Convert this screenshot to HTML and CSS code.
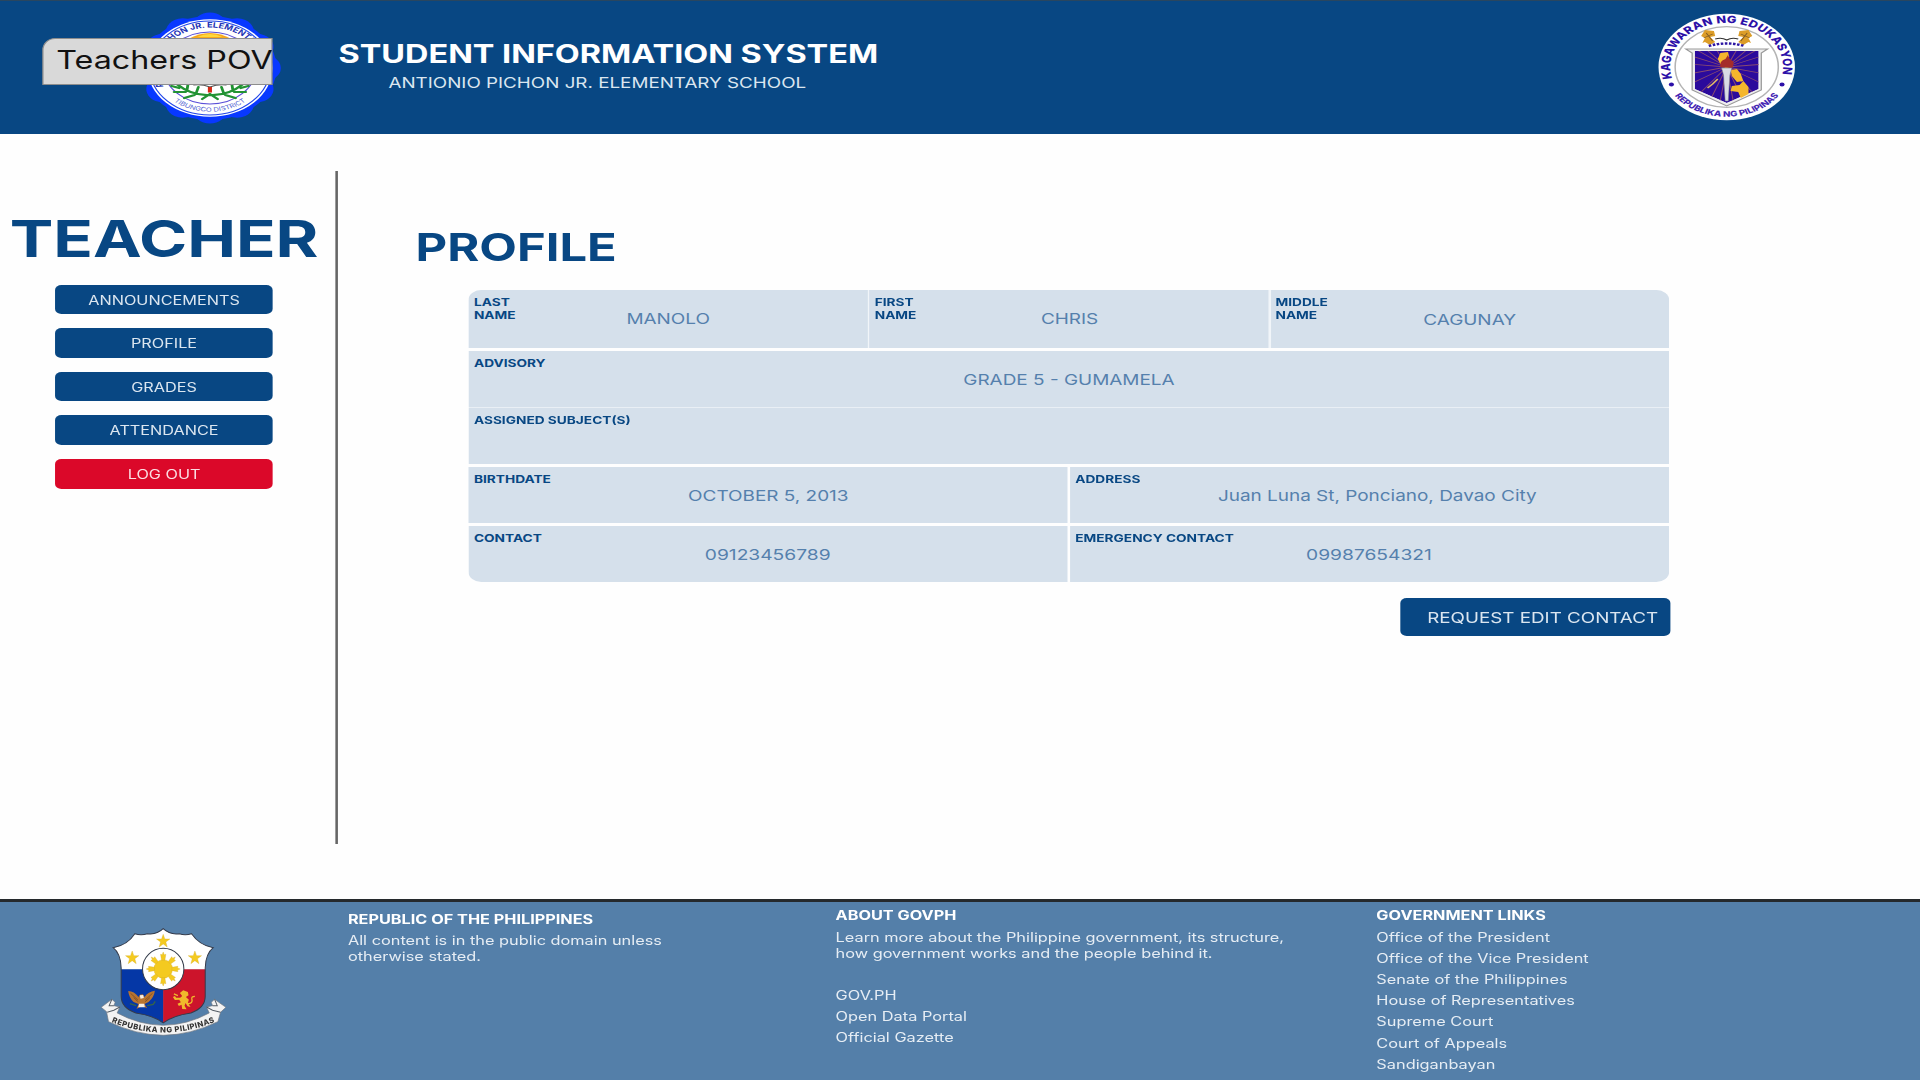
FILE: index.html
```html
<!DOCTYPE html>
<html lang="en">
<head>
<meta charset="utf-8">
<title>Student Information System - Profile</title>
<link rel="stylesheet" href="styles.css">
</head>
<body>
<div class="stage">
  <header class="header">
    <div class="brand">
      <svg class="school-seal" viewBox="-56 -56 112 112">
        <defs>
          <g id="bumps"><circle cy="-42.2" r="13.2"/><circle cy="42.2" r="13.2"/><circle cx="42.2" r="13.2"/><circle cx="-42.2" r="13.2"/></g>
          <path id="schoolTop" d="M-36.2 18.5 A40.6 40.6 0 1 1 36.2 18.5"/>
          <path id="schoolBottom" d="M-38.5 21 A44 44 0 0 0 38.5 21"/>
        </defs>
        <g fill="#0838ff"><circle r="52"/><use href="#bumps"/><use href="#bumps" transform="rotate(30)"/><use href="#bumps" transform="rotate(60)"/></g>
        <circle r="48.8" fill="#fff"/>
        <circle r="46.9" fill="none" stroke="#2347e8" stroke-width="1"/>
        <text class="school-text"><textPath href="#schoolTop" textLength="163" lengthAdjust="spacingAndGlyphs">ANTONIO PICHON JR. ELEMENTARY SCHOOL</textPath></text>
        <text class="district-text"><textPath href="#schoolBottom" startOffset="50%" text-anchor="middle">TIBUNGCO DISTRICT</textPath></text>
        <circle r="36" fill="#fff" stroke="#5a4fd8" stroke-width="1"/>
        <path d="M-17 -29 Q0 -41 17 -29 L14 -22 H-14Z" fill="#f7a81c"/>
        <path d="M-10 -31 Q0 -37 10 -31Z" fill="#ffd83a"/>
        <path d="M-26 16 Q-14 28 0 27 Q14 28 26 16 M-24 20 L-30 18 M-19 24 L-28 24 M-12 27 L-20 30 M-18 23 L-17 15 M-11 26 L-9 19 M24 20 L30 18 M19 24 L28 24 M12 27 L20 30 M18 23 L17 15 M11 26 L9 19 M0 26 L-6 31 M0 26 L6 31" fill="none" stroke="#229333" stroke-width="2.2" stroke-linecap="round"/>
        <path d="M-13 17 Q-6 16 0 19 Q6 16 13 17" fill="none" stroke="#555" stroke-width="1.2"/>
        <rect x="-1.6" y="19" width="3.2" height="5.5" fill="#d42813"/>
      </svg>
      <div class="pov">Teachers POV</div>
    </div>
    <div class="titles">
      <h1 class="title">STUDENT INFORMATION SYSTEM</h1>
      <p class="school">ANTIONIO PICHON JR. ELEMENTARY SCHOOL</p>
    </div>
    <svg class="deped-seal" viewBox="-54 -54 108 108">
      <defs>
        <path id="depTop" d="M-42.6 11.4 A44.1 44.1 0 1 1 42.6 11.4"/>
        <path id="depBottom" d="M-42.5 26 A49.8 49.8 0 0 0 42.5 26"/>
        <clipPath id="shieldClip"><path d="M-25 -16H25V22L0 36L-25 22Z"/></clipPath>
      </defs>
      <circle r="53.3" fill="#fff"/>
      <circle r="40.3" fill="#fff" stroke="#b4b4b4" stroke-width="1.2"/>
      <text class="dep-top"><textPath href="#depTop" textLength="157">KAGAWARAN NG EDUKASYON</textPath></text>
      <text class="dep-bottom"><textPath href="#depBottom" startOffset="50%" text-anchor="middle" textLength="95">REPUBLIKA NG PILIPINAS</textPath></text>
      <circle cx="-43.2" cy="17.5" r="2" fill="#2c10a8"/><circle cx="43.2" cy="17.5" r="2" fill="#2c10a8"/>
      <path d="M-32 -18H32L27 -14V23L0 39L-27 23V-14Z" fill="#eee" stroke="#999" stroke-width="1"/>
      <g clip-path="url(#shieldClip)">
        <path d="M-25 -16H25V22L0 36L-25 22Z" fill="#2b0a9c"/>
        <path d="M0 0L-30 -22M0 0L-20 -22M0 0L-10 -22M0 0L10 -22M0 0L20 -22M0 0L30 -22M0 0L-30 -12M0 0L-30 -3M0 0L-30 7M0 0L-30 18M0 0L-24 30M0 0L-14 36M0 0L-6 40M0 0L30 -12M0 0L30 -3M0 0L30 7M0 0L30 18M0 0L24 30M0 0L14 36M0 0L6 40" stroke="#874a70" stroke-width=".8"/>
      </g>
      <path d="M-5 -14L1 -15L2 -10L0 -6L4 -2L0 2L-5 -3L-7 -8ZM3 3L8 2L11 7L13 14L8 15L4 9ZM4 19L10 18L13 14L17 20L17 27L11 31L9 25L3 24Z" fill="#f4b62d"/>
      <path d="M-7 12L-11 17L-15 21" fill="none" stroke="#e0b565" stroke-width="1.3"/>
      <path d="M-5 0Q-6 -6 -1 -8L1 -12Q2 -7 5 -6Q6 -2 4 1Z" fill="#a42c2b"/>
      <path d="M-4 1H4L2.5 8L1.2 34H-1.2L-2.5 8Z" fill="#d9dce4" stroke="#797b8a" stroke-width=".5"/>
      <g fill="#dc9d28"><path id="lamp" d="M-20 -31L-17 -37L-10 -36L-9 -31L-13 -30L-9 -25L-13 -22L-17 -25L-19 -24L-17 -29Z"/><use href="#lamp" transform="scale(-1 1)"/></g>
      <path d="M-16 -34L-11 -26M16 -34L11 -26M-18 -29L-11 -33M18 -29L11 -33" stroke="#805b25" stroke-width=".8"/>
      <path d="M-9 -28Q-4 -30 0 -27Q4 -30 9 -28" fill="none" stroke="#333" stroke-width="1"/>
      <path d="M-14 -21Q0 -26 14 -21" fill="none" stroke="#2c16a2" stroke-width="2.4" stroke-dasharray="2 1.2"/>
    </svg>
  </header>

  <main class="body">
    <aside class="sidebar">
      <h2 class="role">TEACHER</h2>
      <nav class="menu">
        <a class="menu-item">ANNOUNCEMENTS</a>
        <a class="menu-item">PROFILE</a>
        <a class="menu-item">GRADES</a>
        <a class="menu-item">ATTENDANCE</a>
        <a class="menu-item logout">LOG OUT</a>
      </nav>
    </aside>
    <section class="profile">
      <h2 class="profile-title">PROFILE</h2>
      <div class="card">
        <div class="row thirds">
          <div class="cell"><span class="label">LAST<br>NAME</span><span class="value raised">MANOLO</span></div>
          <div class="cell"><span class="label">FIRST<br>NAME</span><span class="value raised first">CHRIS</span></div>
          <div class="cell"><span class="label">MIDDLE<br>NAME</span><span class="value">CAGUNAY</span></div>
        </div>
        <div class="row joined">
          <div class="cell"><span class="label">ADVISORY</span><span class="value">GRADE 5 - GUMAMELA</span></div>
        </div>
        <div class="row subjects">
          <div class="cell"><span class="label">ASSIGNED SUBJECT(S)</span></div>
        </div>
        <div class="row halves">
          <div class="cell"><span class="label">BIRTHDATE</span><span class="value">OCTOBER 5, 2013</span></div>
          <div class="cell"><span class="label">ADDRESS</span><span class="value address">Juan Luna St, Ponciano, Davao City</span></div>
        </div>
        <div class="row halves last">
          <div class="cell"><span class="label">CONTACT</span><span class="value phone">09123456789</span></div>
          <div class="cell"><span class="label">EMERGENCY CONTACT</span><span class="value phone">09987654321</span></div>
        </div>
      </div>
      <a class="request">REQUEST EDIT CONTACT</a>
    </section>
  </main>

  <footer class="footer">
    <svg class="arms" viewBox="62 142 380 328" preserveAspectRatio="none">
      <defs>
        <clipPath id="armsClip"><path d="M252 147Q232 166 205 162Q185 168 167 162Q145 196 102 204Q125 222 126 265V350Q126 385 170 400Q225 408 252 430Q280 408 335 400Q378 385 378 350V265Q379 222 402 204Q360 196 337 162Q318 168 300 162Q272 166 252 147Z"/></clipPath>
        <path id="star" d="M0 -20L5 -6L20 -6L8 3L12 18L0 9L-12 18L-8 3L-20 -6L-5 -6Z"/>
        <path id="ray" d="M-5 -26L-8 -44L-3 -43L0 -51L3 -43L8 -44L5 -26Z"/>
        <path id="motto" d="M90 424Q170 458 252 459Q334 458 414 424"/>
      </defs>
      <path d="M66 383L98 359L108 368L104 378L122 382L114 400Q180 436 252 437Q324 436 390 400L382 382L400 378L396 368L406 359L440 383L424 398L416 426Q334 466 252 467Q170 466 88 426L82 396Z" fill="#f3f3f3" stroke="#6e7680" stroke-width="2"/>
      <path d="M98 359L90 378L104 378M122 382L104 392L84 398M406 359L414 378L400 378M382 382L400 392L424 398" fill="none" stroke="#555d66" stroke-width="3"/>
      <text class="motto"><textPath href="#motto" startOffset="50%" text-anchor="middle" textLength="318">REPUBLIKA NG PILIPINAS</textPath></text>
      <g clip-path="url(#armsClip)">
        <rect x="100" y="140" width="304" height="130" fill="#fff"/>
        <rect x="100" y="269" width="152" height="165" fill="#0537a6"/>
        <rect x="252" y="269" width="152" height="165" fill="#cc142b"/>
      </g>
      <path d="M252 147Q232 166 205 162Q185 168 167 162Q145 196 102 204Q125 222 126 265V350Q126 385 170 400Q225 408 252 430Q280 408 335 400Q378 385 378 350V265Q379 222 402 204Q360 196 337 162Q318 168 300 162Q272 166 252 147Z" fill="none" stroke="#343b4b" stroke-width="3"/>
      <circle cx="252" cy="268" r="62" fill="#fff" stroke="#333b4a" stroke-width="3"/>
      <g fill="#f4ca20" stroke="#d6ad28" stroke-width="1">
        <use href="#star" x="252" y="184"/><use href="#star" x="159" y="234"/><use href="#star" x="347" y="234"/>
        <g transform="translate(252 268)"><circle r="28"/><use href="#ray"/><use href="#ray" transform="rotate(45)"/><use href="#ray" transform="rotate(90)"/><use href="#ray" transform="rotate(135)"/><use href="#ray" transform="rotate(180)"/><use href="#ray" transform="rotate(225)"/><use href="#ray" transform="rotate(270)"/><use href="#ray" transform="rotate(315)"/></g>
      </g>
      <path d="M147 334Q165 334 178 352L182 345L191 344L196 352Q207 335 227 333Q225 352 208 367L196 373L204 386L188 379L172 388L178 373L163 367Q149 353 147 334Z" fill="#b87430"/>
      <path d="M154 341L176 361M164 354L176 366M220 341L198 361M212 354L198 366" stroke="#7b4a22" stroke-width="2.5"/>
      <path d="M182 347L192 346L194 355L184 357ZM180 372L195 372L197 383L177 383Z" fill="#f5eee6"/>
      <path d="M152 372L171 378M204 378L222 374L228 365" fill="none" stroke="#386546" stroke-width="4"/>
      <path d="M302 340L312 332L326 337L328 347L320 352L329 360L326 369L334 382L325 380L319 370L316 378L322 389L309 388L307 375L299 379L295 372L305 368L300 360L287 361L281 352L287 349L291 354L303 354L309 349Z" fill="#f0b92b"/>
      <path d="M325 372Q342 372 338 358Q336 350 347 350M284 343L296 348" fill="none" stroke="#f0b92b" stroke-width="4"/>
    </svg>
    <div class="col republic">
      <h3>REPUBLIC OF THE PHILIPPINES</h3>
      <p>All content is in the public domain unless<br>otherwise stated.</p>
    </div>
    <div class="col about">
      <h3>ABOUT GOVPH</h3>
      <p>Learn more about the Philippine government, its structure,<br>how government works and the people behind it.</p>
      <ul class="spaced"><li>GOV.PH</li><li>Open Data Portal</li><li>Official Gazette</li></ul>
    </div>
    <div class="col links">
      <h3>GOVERNMENT LINKS</h3>
      <ul><li>Office of the President</li><li>Office of the Vice President</li><li>Senate of the Philippines</li><li>House of Representatives</li><li>Supreme Court</li><li>Court of Appeals</li><li>Sandiganbayan</li></ul>
    </div>
  </footer>
</div>
</body>
</html>
```
FILE: styles.css
```css
* { box-sizing: border-box; margin: 0; padding: 0; }

html, body { width: 1920px; height: 1080px; overflow: hidden; background: #fefefe; }

body { font-family: Inter, "Liberation Sans", sans-serif; }

.stage {
  width: 1500px;
  height: 1080px;
  display: flex;
  flex-direction: column;
  transform: scaleX(1.28);
  transform-origin: 0 0;
}

/* Header */
.header {
  display: flex;
  height: 134px;
  flex: none;
  background: #084783;
  border-top: 1.5px solid #29465f;
  color: #fff;
}
.brand { position: relative; width: 264.5px; flex: none; }
.school-seal { position: absolute; left: 108.2px; top: 11.4px; width: 112px; height: 112px; }
.school-text { font-size: 7.5px; font-weight: 700; fill: #2434b4; }
.district-text { font-size: 6px; font-weight: 400; fill: #5364d2; }
.pov {
  position: absolute;
  left: 33px;
  top: 36.5px;
  width: 180px;
  height: 47px;
  padding-left: 10px;
  background: #d9d9d9;
  border: 1px solid #8d8d8d;
  border-top-left-radius: 10px 12px;
  color: #111;
  font-size: 25.2px;
  line-height: 42px;
  white-space: nowrap;
}
.titles { width: 421.5px; flex: none; padding-top: 37px; white-space: nowrap; }
.title { font-size: 25.3px; font-weight: 700; line-height: 32px; }
.school { padding-left: 39px; font-size: 14.7px; line-height: 26px; color: #dbe6f0; }
.deped-seal { width: 108px; height: 108px; margin: 12px 0 0 609px; flex: none; }
.dep-top { font-size: 10px; font-weight: 800; fill: #2c10a8; }
.dep-bottom { font-size: 7.6px; font-weight: 800; fill: #4526b4; }

/* Body */
.body { display: flex; height: 765px; flex: none; }
.sidebar {
  width: 264.4px;
  height: 673px;
  margin-top: 37px;
  padding: 38px 6px 0 0;
  border-right: 2.5px solid #666;
  flex: none;
  text-align: center;
}
.role { font-size: 51px; font-weight: 700; line-height: 60px; color: #084783; }
.menu { display: flex; flex-direction: column; align-items: center; gap: 14.1px; margin-top: 15.7px; }
.menu-item {
  width: 169.5px;
  height: 29.5px;
  border-radius: 5px;
  background: #084783;
  color: #dbe6f0;
  font-size: 12.7px;
  line-height: 31.6px;
}
.logout { background: #db0829; color: #fbdde2; }

.profile { padding: 89px 0 0 58.7px; width: 1041px; }
.profile-title { padding-left: 1.6px; font-size: 38.2px; font-weight: 700; line-height: 48px; color: #084783; }
.card { width: 937.5px; margin: 19px 0 0 43.3px; border-radius: 10px; overflow: hidden; }
.row { display: grid; height: 56px; margin-bottom: 3px; }
.thirds { grid-template-columns: repeat(3, 1fr); height: 58px; gap: 1.8px; background: #f1f5f9; }
.joined { margin-bottom: 0; border-bottom: 1.5px solid #e9eff5; height: 57px; }
.subjects { margin-bottom: 3px; }
.halves { grid-template-columns: repeat(2, 1fr); gap: 2px; }
.last { margin-bottom: 0; }
.cell {
  position: relative;
  display: flex;
  align-items: center;
  justify-content: center;
  background: #d5e0eb;
}
.label {
  position: absolute;
  left: 3.9px;
  top: 6px;
  font-size: 10.7px;
  font-weight: 700;
  line-height: 13px;
  color: #084783;
  white-space: nowrap;
}
.value { padding-top: 1px; font-size: 14.8px; color: #5580ad; white-space: nowrap; }
.raised { padding: 0 0 1px; }
.first { padding-left: 1px; }
.address { padding-left: 12px; }
.phone { padding-right: 1px; font-size: 15px; }
.request {
  display: block;
  width: 210.8px;
  height: 38px;
  margin: 15.5px 0 0 771px;
  padding-left: 20.9px;
  border-radius: 5px;
  background: #084783;
  color: #dbe6f0;
  font-size: 14.7px;
  line-height: 41.5px;
  white-space: nowrap;
}

/* Footer */
.footer {
  display: flex;
  height: 181px;
  flex: none;
  border-top: 3px solid #25292c;
  background: #547fa9;
  color: #e6edf4;
  font-size: 12.75px;
  line-height: 16px;
}
.arms { width: 99px; height: 109.3px; margin: 25.3px 93.6px 0 78.2px; flex: none; }
.motto { font-size: 23px; font-weight: 800; fill: #333; }
.col { padding-top: 6.3px; flex: none; white-space: nowrap; }
.col h3 { font-size: 12.7px; line-height: 16px; margin-bottom: 5.3px; color: #fff; }
.republic { width: 381px; padding-top: 9.8px; margin-left: 1px; }
.about { width: 422.5px; }
.col ul { list-style: none; }
.col li { line-height: 21.15px; }
.links ul { margin-top: -2.8px; }
.spaced { margin-top: 23.4px; }
```
